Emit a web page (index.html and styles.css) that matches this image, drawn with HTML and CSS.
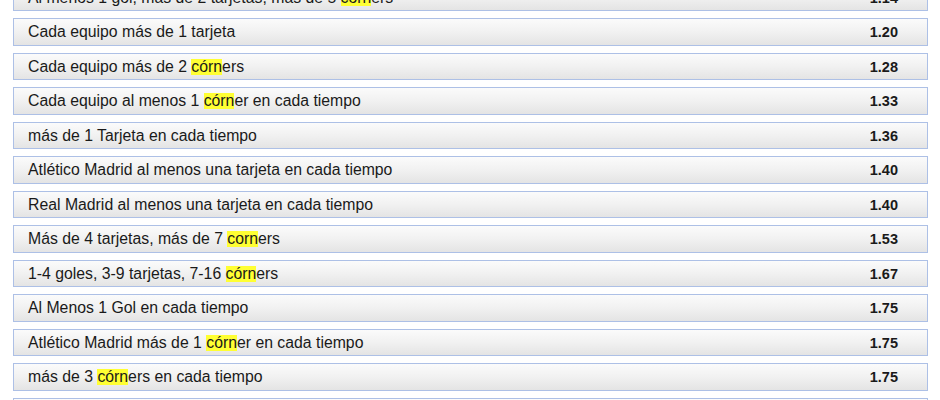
FILE: index.html
```html
<!DOCTYPE html>
<html lang="es">
<head>
<meta charset="utf-8">
<link rel="stylesheet" href="styles.css">
</head>
<body>
<div class="list">
  <div class="row"><span class="name">Al menos 1 gol, más de 2 tarjetas, más de 5 <mark>córn</mark>ers</span><span class="odd">1.14</span></div>
  <div class="row"><span class="name">Cada equipo más de 1 tarjeta</span><span class="odd">1.20</span></div>
  <div class="row"><span class="name">Cada equipo más de 2 <mark>córn</mark>ers</span><span class="odd">1.28</span></div>
  <div class="row"><span class="name">Cada equipo al menos 1 <mark>córn</mark>er en cada tiempo</span><span class="odd">1.33</span></div>
  <div class="row"><span class="name">más de 1 Tarjeta en cada tiempo</span><span class="odd">1.36</span></div>
  <div class="row"><span class="name">Atlético Madrid al menos una tarjeta en cada tiempo</span><span class="odd">1.40</span></div>
  <div class="row"><span class="name">Real Madrid al menos una tarjeta en cada tiempo</span><span class="odd">1.40</span></div>
  <div class="row"><span class="name">Más de 4 tarjetas, más de 7 <mark>corn</mark>ers</span><span class="odd">1.53</span></div>
  <div class="row"><span class="name">1-4 goles, 3-9 tarjetas, 7-16 <mark>córn</mark>ers</span><span class="odd">1.67</span></div>
  <div class="row"><span class="name">Al Menos 1 Gol en cada tiempo</span><span class="odd">1.75</span></div>
  <div class="row"><span class="name">Atlético Madrid más de 1 <mark>córn</mark>er en cada tiempo</span><span class="odd">1.75</span></div>
  <div class="row"><span class="name">más de 3 <mark>córn</mark>ers en cada tiempo</span><span class="odd">1.75</span></div>
  <div class="row"><span class="name">Más de 1 tarjeta en cada tiempo</span><span class="odd">1.80</span></div>
</div>
</body>
</html>
```
FILE: styles.css
```css
html, body {
  margin: 0;
  padding: 0;
  background: #ffffff;
}
body {
  font-family: "Liberation Sans", Arial, sans-serif;
  font-size: 15.8px;
  color: #1a1a1a;
}
.list {
  display: flex;
  flex-direction: column;
  gap: 7px;
  margin: -16.2px 12px 0 13px;
}
.row {
  box-sizing: border-box;
  height: 27.5px;
  display: flex;
  align-items: center;
  justify-content: space-between;
  padding: 0 29px 0 14px;
  border: 1px solid #adc0e6;
  background: linear-gradient(to bottom, #fbfbfb 0%, #f1f1f1 50%, #e4e4e4 100%);
}
.name {
  white-space: nowrap;
}
.odd {
  font-size: 14.5px;
  font-weight: bold;
}
mark {
  background: #ffff33;
  color: inherit;
  padding: 0;
  line-height: 16px;
  display: inline-block;
}
```
